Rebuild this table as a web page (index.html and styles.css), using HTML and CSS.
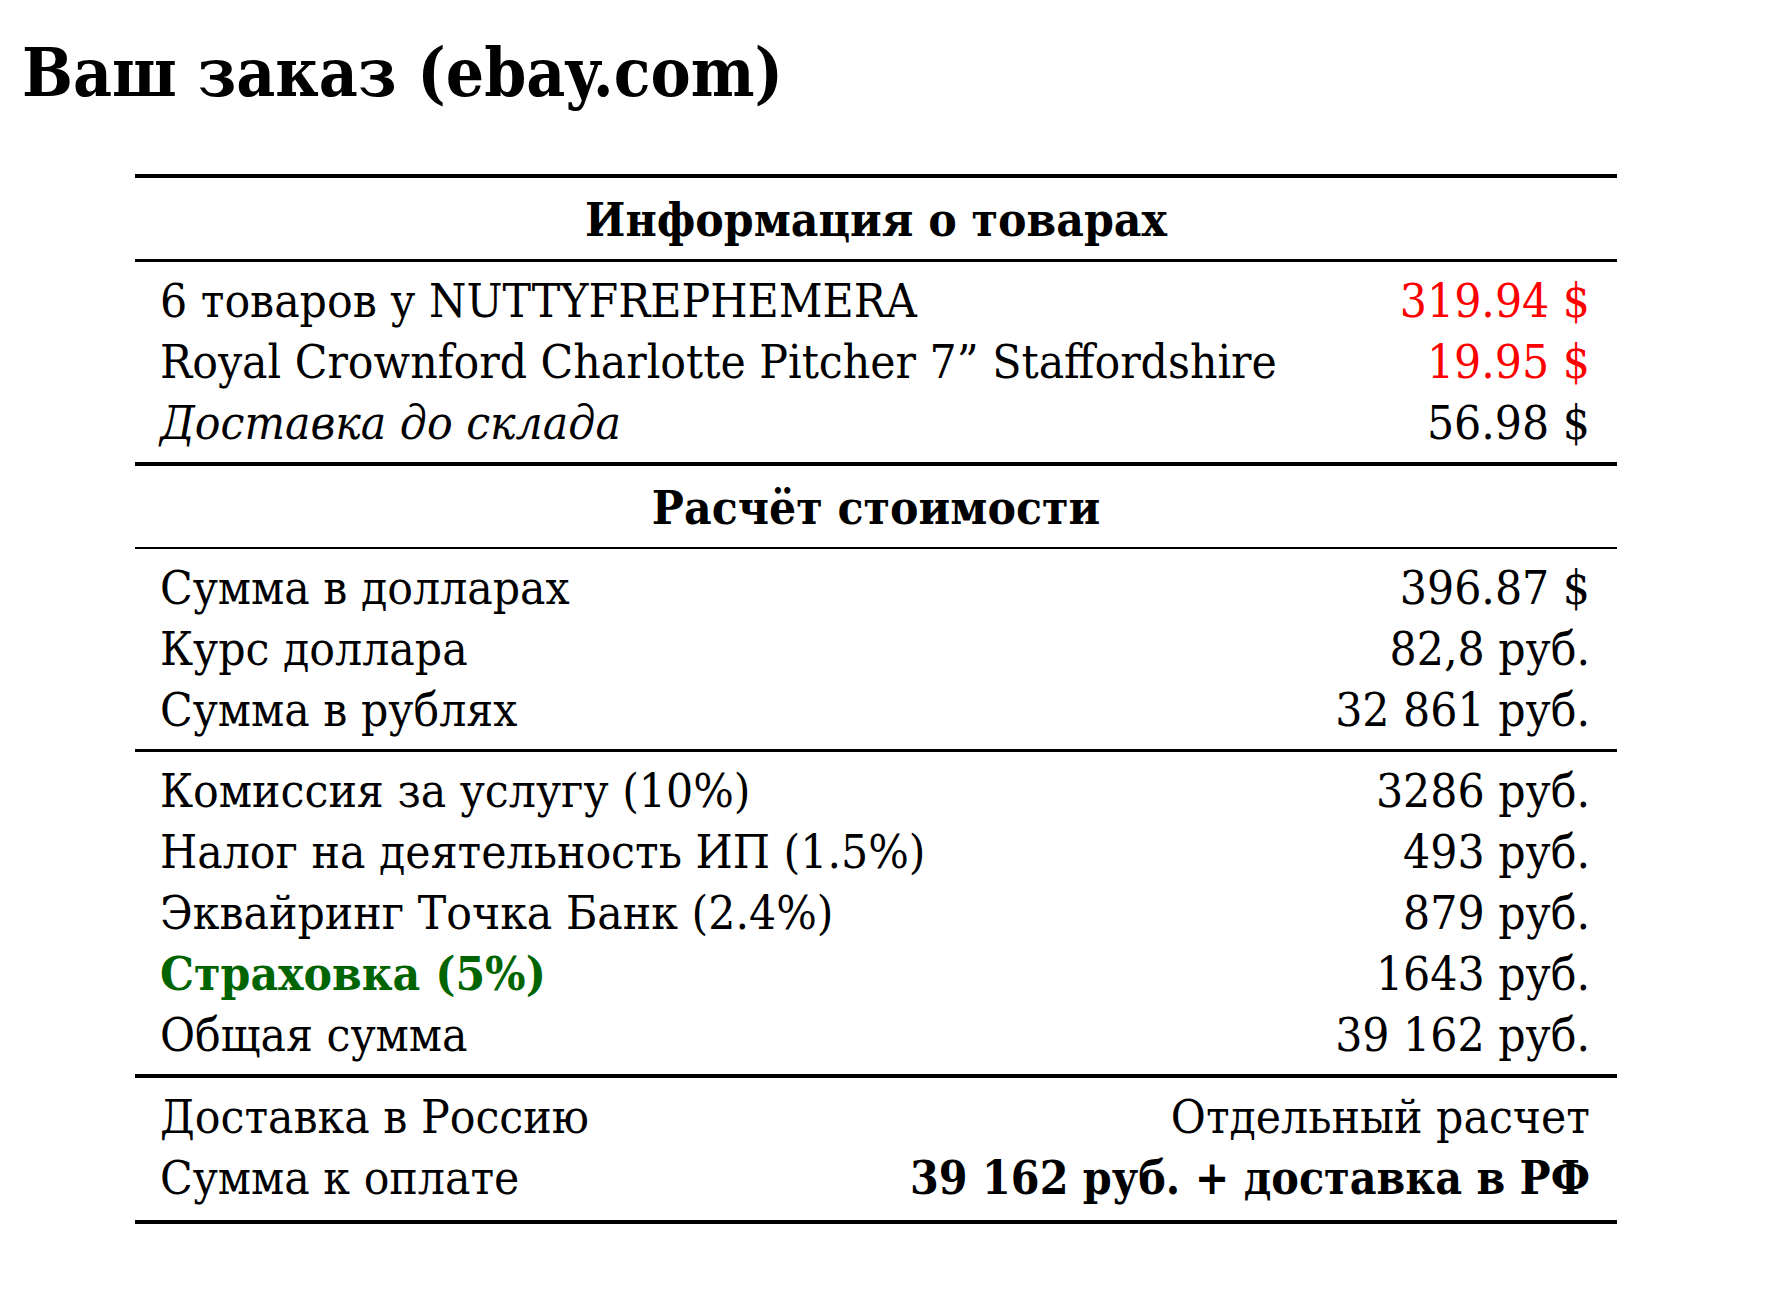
FILE: index.html
```html
<!DOCTYPE html>
<html lang="ru">
<head>
<meta charset="utf-8">
<title>Ваш заказ (ebay.com)</title>
<link rel="stylesheet" href="styles.css">
</head>
<body>
<h1 class="title">Ваш заказ (ebay.com)</h1>
<div class="order">
  <div class="head head-first">Информация о товарах</div>
  <div class="group rule-mid">
    <div class="row"><span>6 товаров у NUTTYFREPHEMERA</span><span class="red">319.94 $</span></div>
    <div class="row"><span>Royal Crownford Charlotte Pitcher 7” Staffordshire</span><span class="red">19.95 $</span></div>
    <div class="row"><span class="ital">Доставка до склада</span><span>56.98 $</span></div>
  </div>
  <div class="head rule-heavy">Расчёт стоимости</div>
  <div class="group rule-thin">
    <div class="row"><span>Сумма в долларах</span><span>396.87 $</span></div>
    <div class="row"><span>Курс доллара</span><span>82,8 руб.</span></div>
    <div class="row"><span>Сумма в рублях</span><span>32 861 руб.</span></div>
  </div>
  <div class="group rule-mid">
    <div class="row"><span>Комиссия за услугу (10%)</span><span>3286 руб.</span></div>
    <div class="row"><span>Налог на деятельность ИП (1.5%)</span><span>493 руб.</span></div>
    <div class="row"><span>Эквайринг Точка Банк (2.4%)</span><span>879 руб.</span></div>
    <div class="row"><span class="green">Страховка (5%)</span><span>1643 руб.</span></div>
    <div class="row"><span>Общая сумма</span><span>39 162 руб.</span></div>
  </div>
  <div class="group group-last rule-heavy">
    <div class="row"><span>Доставка в Россию</span><span>Отдельный расчет</span></div>
    <div class="row"><span>Сумма к оплате</span><span class="bold">39 162 руб. + доставка в РФ</span></div>
  </div>
</div>
</body>
</html>
```

FILE: styles.css
```css
html, body {
  margin: 0;
  padding: 0;
  background: #ffffff;
}

body {
  font-family: "DejaVu Serif", serif;
  font-stretch: condensed;
  color: #000000;
  width: 1775px;
  height: 1313px;
  overflow: hidden;
}

.title {
  margin: 0;
  padding: 33px 0 0 22px;
  font-size: 67px;
  line-height: 80px;
  font-weight: bold;
}

.order {
  margin: 61px 0 0 135px;
  width: 1482px;
  border-top: 4px solid #000;
  border-bottom: 4px solid #000;
  font-size: 47.5px;
}

.head {
  height: 81px;
  display: flex;
  align-items: center;
  justify-content: center;
  font-weight: bold;
}

.rule-heavy { border-top: 4px solid #000; }
.rule-mid { border-top: 3px solid #000; }
.rule-thin { border-top: 2px solid #000; }

.group {
  padding: 8px 27px 9px 25px;
}

.group-last {
  padding-bottom: 12px;
}

.row {
  display: flex;
  justify-content: space-between;
  align-items: baseline;
  line-height: 61px;
  height: 61px;
}

.red { color: #ff0000; }
.green { color: #006400; font-weight: bold; }
.ital { font-style: italic; }
.bold { font-weight: bold; font-size: 46px; }
```
